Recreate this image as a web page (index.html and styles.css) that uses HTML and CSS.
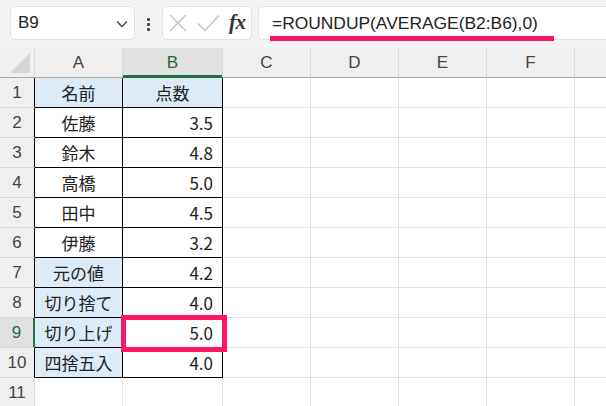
FILE: index.html
```html
<!DOCTYPE html>
<html lang="ja">
<head>
<meta charset="utf-8">
<title>ROUNDUP</title>
<link rel="stylesheet" href="styles.css">
</head>
<body>
<div class="app">
  <div class="toolbar">
    <div class="namebox">
      <span class="name">B9</span>
      <svg class="chev" width="12" height="8" viewBox="0 0 12 8"><path d="M1 1.5 L6 6.5 L11 1.5" fill="none" stroke="#444" stroke-width="1.4"/></svg>
    </div>
    <div class="dots"><i></i><i></i><i></i></div>
    <div class="fxbox">
      <svg class="ico" width="18" height="18" viewBox="0 0 18 18"><path d="M1 1 L17 17 M17 1 L1 17" stroke="#c4c4c4" stroke-width="1.5" fill="none"/></svg>
      <svg class="ico check" width="23" height="18" viewBox="0 0 23 18"><path d="M1 9.5 L8 16.5 L22 1.5" stroke="#c4c4c4" stroke-width="1.5" fill="none"/></svg>
      <span class="fx">fx</span>
    </div>
    <div class="formula">
      <span class="ftext">=ROUNDUP(AVERAGE(B2:B6),0)</span>
      <div class="underline"></div>
    </div>
  </div>
  <div class="sheet">
    <div class="grid">
      <div class="corner"><span class="tri"></span></div>
      <div class="colh">A</div>
      <div class="colh sel">B</div>
      <div class="colh">C</div>
      <div class="colh">D</div>
      <div class="colh">E</div>
      <div class="colh">F</div>
      <div class="colh"></div>

      <div class="rowh tb">1</div>
      <div class="c t blue ctr">名前</div>
      <div class="c t blue ctr">点数</div>
      <div class="c"></div><div class="c"></div><div class="c"></div><div class="c"></div><div class="c"></div>

      <div class="rowh tb">2</div>
      <div class="c t ctr">佐藤</div>
      <div class="c t num">3.5</div>
      <div class="c"></div><div class="c"></div><div class="c"></div><div class="c"></div><div class="c"></div>

      <div class="rowh tb">3</div>
      <div class="c t ctr">鈴木</div>
      <div class="c t num">4.8</div>
      <div class="c"></div><div class="c"></div><div class="c"></div><div class="c"></div><div class="c"></div>

      <div class="rowh tb">4</div>
      <div class="c t ctr">高橋</div>
      <div class="c t num">5.0</div>
      <div class="c"></div><div class="c"></div><div class="c"></div><div class="c"></div><div class="c"></div>

      <div class="rowh tb">5</div>
      <div class="c t ctr">田中</div>
      <div class="c t num">4.5</div>
      <div class="c"></div><div class="c"></div><div class="c"></div><div class="c"></div><div class="c"></div>

      <div class="rowh tb">6</div>
      <div class="c t ctr">伊藤</div>
      <div class="c t num">3.2</div>
      <div class="c"></div><div class="c"></div><div class="c"></div><div class="c"></div><div class="c"></div>

      <div class="rowh tb">7</div>
      <div class="c t blue ctr">元の値</div>
      <div class="c t num">4.2</div>
      <div class="c"></div><div class="c"></div><div class="c"></div><div class="c"></div><div class="c"></div>

      <div class="rowh tb">8</div>
      <div class="c t blue ctr">切り捨て</div>
      <div class="c t num">4.0</div>
      <div class="c"></div><div class="c"></div><div class="c"></div><div class="c"></div><div class="c"></div>

      <div class="rowh sel">9</div>
      <div class="c t blue ctr">切り上げ</div>
      <div class="c t num">5.0</div>
      <div class="c"></div><div class="c"></div><div class="c"></div><div class="c"></div><div class="c"></div>

      <div class="rowh tb">10</div>
      <div class="c t blue ctr">四捨五入</div>
      <div class="c t num">4.0</div>
      <div class="c"></div><div class="c"></div><div class="c"></div><div class="c"></div><div class="c"></div>

      <div class="rowh">11</div>
      <div class="c"></div>
      <div class="c"></div>
      <div class="c"></div><div class="c"></div><div class="c"></div><div class="c"></div><div class="c"></div>
    </div>
    <div class="mark"></div>
  </div>
</div>
</body>
</html>
```
FILE: styles.css
```css
* { box-sizing: border-box; }
html, body { margin: 0; padding: 0; }
body {
  width: 606px;
  height: 406px;
  overflow: hidden;
  background: #ffffff;
  font-family: "Liberation Sans", Arial, sans-serif;
}
.app { width: 606px; height: 406px; overflow: hidden; }

.toolbar {
  height: 48px;
  background: #f3f3f3;
  display: flex;
  align-items: flex-start;
  padding: 6px 0 0 10px;
  white-space: nowrap;
}
.namebox, .fxbox, .formula {
  height: 34px;
  background: #ffffff;
  border: 1px solid #e1e1e1;
  border-radius: 5px;
  display: flex;
  align-items: center;
  flex-shrink: 0;
}
.namebox {
  width: 125px;
  padding: 0 6px 0 7px;
  justify-content: space-between;
}
.name { font-size: 17px; color: #222; }
.chev { margin-top: 1px; }
.dots {
  width: 3px;
  margin: 12px 12px 0 12px;
  display: flex;
  flex-direction: column;
  gap: 2px;
}
.dots i { display: block; width: 3px; height: 3px; background: #444; border-radius: 1px; }
.fxbox {
  width: 90px;
  padding: 0 4px 0 6px;
  gap: 0;
}
.ico { display: block; }
.check { margin-left: 10px; }
.fx {
  margin-left: 9px;
  font-family: "Liberation Serif", "Times New Roman", serif;
  font-style: italic;
  font-weight: bold;
  font-size: 21px;
  color: #333;
  letter-spacing: -0.5px;
  line-height: 1;
  margin-top: -2px;
}
.formula {
  width: 370px;
  margin-left: 6px;
  padding-left: 13px;
  position: relative;
  border-right: none;
  border-radius: 5px 0 0 5px;
}
.ftext {
  font-size: 17.4px;
  color: #222;
  margin-top: 1px;
}
.underline {
  position: absolute;
  left: 11px;
  top: 29px;
  width: 284px;
  height: 5px;
  background: #fd1762;
}

.sheet { position: relative; }
.grid {
  display: grid;
  grid-template-columns: 35px 88px 100px 88px 88px 88px 88px 88px;
  grid-auto-rows: 30px;
  width: 663px;
}
.corner, .colh {
  background: #efefef;
  border-right: 1px solid #d9d9d9;
  border-bottom: 1px solid #a9a9a9;
}
.corner {
  display: flex;
  justify-content: flex-end;
  align-items: flex-end;
  padding: 0 4px 4px 0;
}
.tri {
  display: block;
  width: 20px;
  height: 20px;
  background: #d6d6d6;
  clip-path: polygon(100% 0, 100% 100%, 0 100%);
}
.colh, .rowh {
  display: flex;
  align-items: center;
  justify-content: center;
  font-size: 17px;
  color: #444;
}
.colh.sel {
  background: #e1e1e1;
  color: #1d6b3f;
  box-shadow: inset 0 -2px 0 #1e7145;
  border-bottom-color: #1e7145;
}
.rowh {
  background: #efefef;
  border-right: 1px solid #d9d9d9;
  border-bottom: 1px solid #d9d9d9;
}
.rowh.tb { border-right-color: #000; }
.rowh.sel {
  background: #e1e1e1;
  color: #1d6b3f;
  border-right: 2px solid #1e7145;
}
.c {
  border-right: 1px solid #e1e1e1;
  border-bottom: 1px solid #e1e1e1;
  font-family: "Noto Sans CJK JP", "Noto Sans", sans-serif;
  font-size: 17px;
  color: #222;
  display: flex;
  align-items: center;
}
.c.t { border-right-color: #000; border-bottom-color: #000; }
.blue { background: #ddebf7; }
.ctr { justify-content: center; }
.num { justify-content: flex-end; padding-right: 9px; }

.mark {
  position: absolute;
  left: 121px;
  top: 267px;
  width: 106px;
  height: 37px;
  border: 5px solid #fd1762;
}
```
